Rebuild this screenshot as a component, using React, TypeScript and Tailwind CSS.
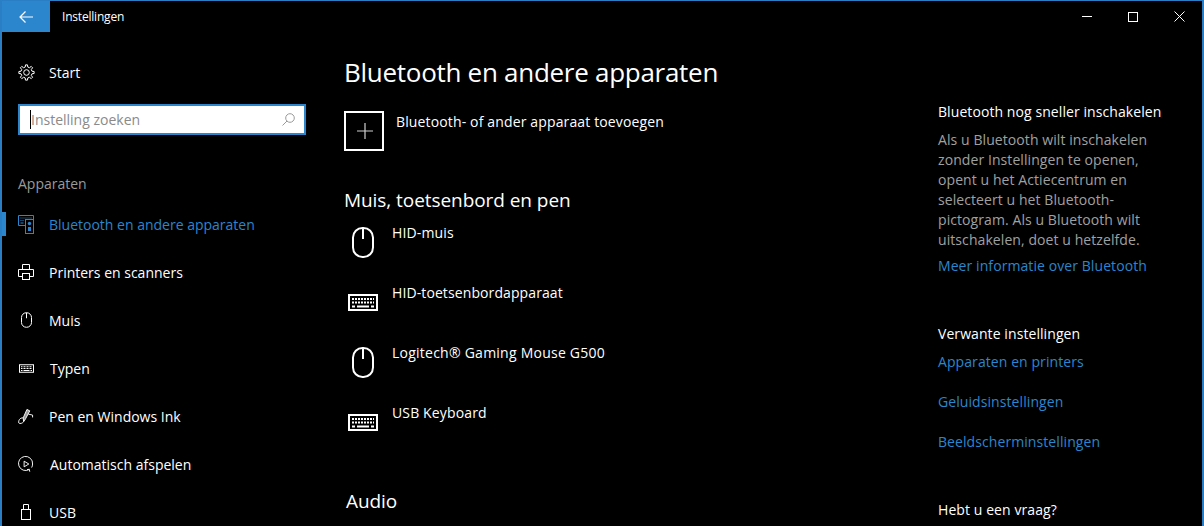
import React from "react";

const ic = { fill: "none", stroke: "currentColor", strokeWidth: 1 } as const;

function Gear() {
  const pts: string[] = [];
  const n = 8;
  for (let i = 0; i < n; i++) {
    const a = (i * 2 * Math.PI) / n;
    const step = (2 * Math.PI) / n;
    const corners: [number, number][] = [
      [5.6, a - step * 0.3],
      [7.7, a - step * 0.16],
      [7.7, a + step * 0.16],
      [5.6, a + step * 0.3],
    ];
    corners.forEach(([r, t]) => pts.push(`${(8.5 + r * Math.cos(t)).toFixed(2)},${(8.5 + r * Math.sin(t)).toFixed(2)}`));
  }
  return (
    <svg width="17" height="17" viewBox="0 0 17 17" {...ic}>
      <polygon points={pts.join(" ")} strokeLinejoin="round" />
      <circle cx="8.500" cy="8.500" r="2.800" />
    </svg>
  );
}
function BtDevices() {
  return (
    <svg width="16" height="19" viewBox="0 0 16 19" {...ic}>
      <path d="M7 10.500H.5V.5h15v3.500" />
      <path d="M2.500 3h1M4.500 3h1M6.500 3h1M8.500 3h1M10.500 3h1M12.500 3h1M2.500 5.500h1M4.500 5.500h1M2.500 8h3" />
      <rect x="7.500" y="4.500" width="8" height="14" />
      <circle cx="11.500" cy="8.500" r="1.700" fill="currentColor" stroke="none" />
      <rect x="10" y="12" width="3" height="4" fill="currentColor" stroke="none" />
    </svg>
  );
}
function Printer() {
  return (
    <svg width="16" height="16" viewBox="0 0 16 16" {...ic}>
      <path d="M4.500 5V.5h7V5" />
      <path d="M4.500 12.500H.5V5.500h15v7h-4" />
      <rect x="4.500" y="9.500" width="7" height="6" />
    </svg>
  );
}
function Mouse({ big }: { big?: boolean }) {
  return (
    <svg width={big ? 22 : 11} height={big ? 31 : 16} viewBox="0 0 22 31" fill="none" stroke="currentColor" strokeWidth="2">
      <rect x="1" y="1" width="20" height="29" rx="9.500" />
      <path d="M11 1v11" />
    </svg>
  );
}
function Keyboard({ big }: { big?: boolean }) {
  return (
    <svg width={big ? 30 : 15} height={big ? 17 : 9} viewBox="0 0 30 17" fill="none" stroke="currentColor" strokeWidth="2">
      <rect x="1" y="1" width="28" height="15" />
      <path d="M4 5h22M4 8.500h22" strokeDasharray="2 1" strokeWidth="2" />
      <path d="M4 12.500h3M9 12.500h12M23 12.500h3" strokeWidth="2" />
    </svg>
  );
}
function Pen() {
  return (
    <svg width="17" height="17" viewBox="0 0 17 17" {...ic}>
      <path d="M9.500 1L12.500 2.500L8 11L6 14L5.500 10Z" fill="#999" />
      <path d="M5.500 10C2 9.500.2 13 .8 15.300C2 16.800 5 15.500 6 14" />
      <path d="M11 6L15.500 7L15.500 9.500" />
    </svg>
  );
}
function AutoPlay() {
  return (
    <svg width="17" height="18" viewBox="0 0 17 18" {...ic}>
      <path d="M12 14.800A7.500 7.500 0 1 1 15.500 9c0 1.400-.4 2.700-1 3.800" />
      <path d="M6.500 6l5 3-5 3z" />
      <path d="M9.500 15l2.500-.4.500 2.600" />
    </svg>
  );
}
function Usb() {
  return (
    <svg width="10" height="16" viewBox="0 0 10 16" {...ic}>
      <rect x="0.500" y="5.500" width="9" height="10" />
      <path d="M2.500 5.500v-5h5v5M4 2.500h.01M6 2.500h.01" />
    </svg>
  );
}

const nav: { label: string; icon: React.ReactNode; active?: boolean; nudge?: boolean }[] = [
  { label: "Bluetooth en andere apparaten", icon: <BtDevices />, active: true },
  { label: "Printers en scanners", icon: <Printer /> },
  { label: "Muis", icon: <Mouse /> },
  { label: "Typen", icon: <Keyboard />, nudge: true },
  { label: "Pen en Windows Ink", icon: <Pen /> },
  { label: "Automatisch afspelen", icon: <AutoPlay />, nudge: true },
  { label: "USB", icon: <Usb /> },
];

const devices = [
  { label: "HID-muis", mouse: true, track: "tracking-[0.14px]" },
  { label: "HID-toetsenbordapparaat", mouse: false, track: "tracking-[0.1px]" },
  { label: "Logitech® Gaming Mouse G500", mouse: true, track: "tracking-[0.24px]" },
  { label: "USB Keyboard", mouse: false, track: "tracking-[0.14px]" },
];

export default function App() {
  return (
    <div className="h-[526px] w-[1204px] overflow-hidden border-x-2 border-t border-[#2a7fc4] bg-black font-['Open_Sans','Noto_Sans',sans-serif] text-white">
      <header className="flex h-[31px] items-stretch">
        <div className="flex w-12 items-center justify-center bg-[#2b86cd]">
          <svg width="14" height="12" viewBox="0 0 14 12" fill="none" stroke="white" strokeWidth="1.200">
            <path d="M14 6H1M6.500.5L1 6l5.500 5.500" />
          </svg>
        </div>
        <div className="ml-3 flex flex-1 items-center text-[12px] tracking-[-0.2px]">Instellingen</div>
        <div className="flex w-[144px] items-center pl-[6px]">
          <div className="flex w-[46px] justify-center">
            <div className="h-px w-[10px] bg-white" />
          </div>
          <div className="flex w-[46px] justify-center">
            <div className="h-[10px] w-[10px] border border-white" />
          </div>
          <div className="flex w-[46px] justify-center">
            <svg width="11" height="11" viewBox="0 0 11 11" stroke="white" strokeWidth="1"><path d="M.5.5l10 10M10.500.5l-10 10" /></svg>
          </div>
        </div>
      </header>

      <div className="flex">
        <aside className="w-[342px] shrink-0">
          <div className="mt-[14px] flex h-[48px] items-center pl-4 pt-[5px] text-[14px]">
            <span className="flex w-[31px]"><Gear /></span>
            <span>Start</span>
          </div>
          <div className="ml-4 mt-[10px] flex h-[31px] w-[288px] items-center border-2 border-[#2b86cd] bg-white pl-[10px] pr-[9px]">
            <div className="h-[19px] w-px bg-black" />
            <span className="flex-1 text-[14px] text-[#8a8a8a]">Instelling zoeken</span>
            <svg width="13" height="13" viewBox="0 0 13 13" fill="none" stroke="#9a9a9a" strokeWidth="1">
              <circle cx="8" cy="5" r="4.300" />
              <path d="M5 8l-4.500 4.500" />
            </svg>
          </div>
          <div className="ml-4 mt-[38px] h-[22px] text-[14px] text-[#9a9a9a]">Apparaten</div>
          <nav className="mt-[5px]">
            {nav.map((n) => (
              <div key={n.label} className={`flex h-[48px] items-center text-[14px] ${n.active ? "text-[#2b86cd]" : "text-white"}`}>
                <div className={`h-[24px] w-1 ${n.active ? "bg-[#2b86cd]" : ""}`} />
                <span className="ml-3 mr-[15px] flex w-4 justify-center">{n.icon}</span>
                <span className={n.nudge ? "ml-px" : ""}>{n.label}</span>
              </div>
            ))}
          </nav>
        </aside>

        <main className="w-[594px] shrink-0">
          <h1 className="mt-[18px] text-[26px] leading-[44px] tracking-[-0.28px]">Bluetooth en andere apparaten</h1>
          <div className="mt-[17px] flex">
            <div className="flex h-10 w-10 items-center justify-center border-2 border-white pl-[2px]">
              <svg width="16" height="16" viewBox="0 0 16 16" stroke="#d0d0d0" strokeWidth="1.200"><path d="M8 0v16M0 8h16" /></svg>
            </div>
            <span className="ml-3 pt-px text-[14px] leading-5 tracking-[0.14px]">Bluetooth- of ander apparaat toevoegen</span>
          </div>
          <h2 className="mt-[34px] text-[19px] leading-[30px] tracking-[-0.06px]">Muis, toetsenbord en pen</h2>
          <div className="mt-[7px]">
            {devices.map((d) => (
              <div key={d.label} className="flex h-[60px] items-start">
                <span className="mr-[10px] flex h-[40px] w-[38px] items-center justify-center">
                  {d.mouse ? <Mouse big /> : <Keyboard big />}
                </span>
                <span className={`pt-px text-[14px] leading-5 ${d.track}`}>{d.label}</span>
              </div>
            ))}
          </div>
          <h2 className="ml-[2px] mt-[24px] text-[19px] leading-[30px] tracking-[-0.1px]">Audio</h2>
        </main>

        <aside className="flex-1 pt-[70px] text-[14px] tracking-[0.08px]">
          <p className="leading-5">Bluetooth nog sneller inschakelen</p>
          <p className="mt-[8px] leading-5 text-[#a0a0a0]">
            Als u Bluetooth wilt inschakelen
            <br />zonder Instellingen te openen,
            <br />opent u het Actiecentrum en
            <br />selecteert u het Bluetooth-
            <br />pictogram. Als u Bluetooth wilt
            <br />uitschakelen, doet u hetzelfde.
          </p>
          <p className="mt-[6px] leading-5 text-[#2b86cd]">Meer informatie over Bluetooth</p>
          <p className="mt-[48px] leading-5">Verwante instellingen</p>
          <p className="mt-[8px] leading-5 text-[#2b86cd]">Apparaten en printers</p>
          <p className="mt-[20px] leading-5 text-[#2b86cd]">Geluidsinstellingen</p>
          <p className="mt-[20px] leading-5 text-[#2b86cd]">Beeldscherminstellingen</p>
          <p className="mt-[48px] leading-5">Hebt u een vraag?</p>
        </aside>
      </div>
    </div>
  );
}
